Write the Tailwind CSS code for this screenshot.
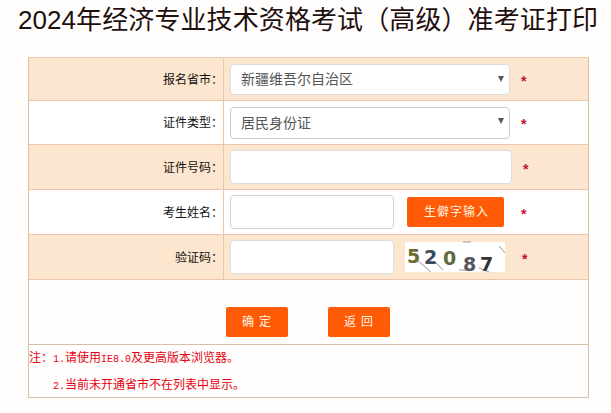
<!DOCTYPE html>
<html lang="zh-CN">
<head>
    <meta charset="UTF-8">
    <meta name="viewport" content="width=device-width, initial-scale=1.0">
    <title>准考证打印</title>
    <script src="https://cdn.jsdelivr.net/npm/@tailwindcss/browser@4"></script>
</head>
<body class="bg-[#fffefd] h-[413px] overflow-hidden font-['Liberation_Sans','Noto_Sans_CJK_SC',sans-serif]">

    <h1 class="h-[57px] pt-[2px] pl-[5px] text-center text-[26px] leading-[36px] tracking-[0.1px] font-normal text-[#1f0f0f] whitespace-nowrap">2024年经济专业技术资格考试（高级）准考证打印</h1>

    <div class="ml-[28px] w-[561px] border border-[#d8bfa8] border-t-[#eac8a8]">
        <!-- 报名省市 -->
        <div class="flex h-[43px] bg-[#fde6cf] border-b border-[#ecc6a6]">
            <div class="w-[195px] border-r border-[#ecc6a6] text-right text-xs leading-[45px] text-[#111]">报名省市：</div>
            <div class="flex items-center pl-[6px]">
                <div class="relative">
                    <select class="appearance-none block w-[280px] h-[31px] pl-[10px] bg-white border border-[#ddd] rounded text-sm text-[#555]">
                        <option>新疆维吾尔自治区</option>
                    </select>
                    <span class="absolute right-[6px] top-[12px] border-x-[3px] border-x-transparent border-t-[6px] border-t-[#555]"></span>
                </div>
                <span class="ml-[11px] mt-[3px] text-sm font-bold text-[#c8102e]">*</span>
            </div>
        </div>
        <!-- 证件类型 -->
        <div class="flex h-[44px] bg-white border-b border-[#ecc6a6]">
            <div class="w-[195px] border-r border-[#ecc6a6] text-right text-xs leading-[45px] text-[#111]">证件类型：</div>
            <div class="flex items-center pl-[6px]">
                <div class="relative">
                    <select class="appearance-none block w-[280px] h-[32px] pl-[10px] bg-white border border-[#ccc] rounded text-sm text-[#555]">
                        <option>居民身份证</option>
                    </select>
                    <span class="absolute right-[6px] top-[11px] border-x-[3px] border-x-transparent border-t-[6px] border-t-[#555]"></span>
                </div>
                <span class="ml-[11px] mt-[3px] text-sm font-bold text-[#c8102e]">*</span>
            </div>
        </div>
        <!-- 证件号码 -->
        <div class="flex h-[45px] bg-[#fde6cf] border-b border-[#ecc6a6]">
            <div class="w-[195px] border-r border-[#ecc6a6] text-right text-xs leading-[46px] text-[#111]">证件号码：</div>
            <div class="flex items-center pl-[6px]">
                <input type="text" class="block w-[282px] h-[34px] bg-white border border-[#ddd] rounded">
                <span class="ml-[11px] mt-[3px] text-sm font-bold text-[#c8102e]">*</span>
            </div>
        </div>
        <!-- 考生姓名 -->
        <div class="flex h-[45px] bg-white border-b border-[#ecc6a6]">
            <div class="w-[195px] border-r border-[#ecc6a6] text-right text-xs leading-[46px] text-[#111]">考生姓名：</div>
            <div class="flex items-center pl-[6px]">
                <input type="text" class="block w-[164px] h-[34px] bg-white border border-[#ccd3dc] rounded">
                <button class="ml-[13px] w-[97px] h-[30px] pl-[2px] bg-[#ff5a06] rounded-[2px] text-xs tracking-[1px] text-[#fff3e0]">生僻字输入</button>
                <span class="ml-[17px] mt-[3px] text-sm font-bold text-[#c8102e]">*</span>
            </div>
        </div>
        <!-- 验证码 -->
        <div class="flex h-[45px] bg-[#fde6cf] border-b border-[#ecc6a6]">
            <div class="w-[195px] border-r border-[#ecc6a6] text-right text-xs leading-[46px] text-[#111]">验证码：</div>
            <div class="flex items-center pl-[6px]">
                <input type="text" class="block w-[164px] h-[34px] bg-white border border-[#ddd] rounded">
                <svg class="ml-[11px] overflow-visible" width="100" height="30" viewBox="0 0 100 30">
                    <rect width="100" height="30" fill="#fff"/>
                    <path d="M12 18L26 30M30 20L38 28M58 0H66M94 4L100 11M54 28H62M74 26L84 30" stroke="#999" fill="none"/>
                    <g font-family="'DejaVu Sans',sans-serif" font-weight="bold" font-size="19">
                        <text x="2" y="21" fill="#6b6b2f">5</text>
                        <text x="19" y="22" fill="#3d4a5c">2</text>
                        <text x="38" y="23" fill="#5c6b38">0</text>
                        <text x="58" y="29" fill="#55555f">8</text>
                        <text x="75" y="29" fill="#333">7</text>
                    </g>
                </svg>
                <span class="ml-[17px] mt-[3px] text-sm font-bold text-[#c8102e]">*</span>
            </div>
        </div>
        <!-- 按钮 -->
        <div class="flex h-[65px] pt-[27px] pl-[197px] gap-[40px] border-b border-[#d8bfa8]">
            <button class="w-[62px] h-[30px] pl-[4px] bg-[#ff5a06] rounded-[2px] text-xs tracking-[5px] text-[#fff3e0]">确定</button>
            <button class="w-[62px] h-[30px] pl-[4px] bg-[#ff5a06] rounded-[2px] text-xs tracking-[5px] text-[#fff3e0]">返回</button>
        </div>
        <!-- 注 -->
        <div class="h-[52px] text-xs leading-[26px] text-[#e60012]">
            <p>注：<span class="font-['Liberation_Mono'] text-[10px]">1.</span>请使用<span class="font-['Liberation_Mono'] text-[10px]">IE8.0</span>及更高版本浏览器。</p>
            <p class="pl-[24px] -mt-[1px]"><span class="font-['Liberation_Mono'] text-[10px]">2.</span>当前未开通省市不在列表中显示。</p>
        </div>
    </div>

</body>
</html>
